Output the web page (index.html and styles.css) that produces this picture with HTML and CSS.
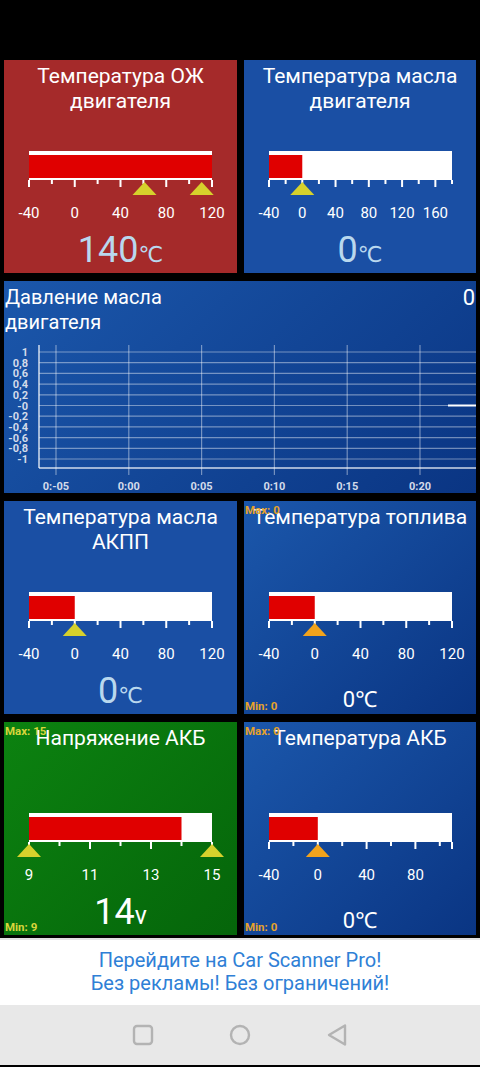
FILE: index.html
```html
<!DOCTYPE html>
<html lang="ru">
  <head>
    <meta charset="UTF-8" />
    <meta name="viewport" content="width=device-width, initial-scale=1.0" />
    <title>Car Scanner</title>
    <link rel="stylesheet" href="styles.css">
  </head>
  <body>
    <div class="status-bar"></div>

    <div class="dashboard">
      <!-- Coolant -->
      <div class="card red">
        <div class="title">Температура ОЖ<br>двигателя</div>
        <svg class="gauge" data-min="-40" data-max="120" data-step="20" data-labels="-40,0,40,80,120" data-value="140" data-marks="61,111" data-mark="#d6d12c"></svg>
        <div class="value">140<span class="unit">℃</span></div>
      </div>

      <!-- Engine oil -->
      <div class="card blue">
        <div class="title">Температура масла<br>двигателя</div>
        <svg class="gauge" data-min="-40" data-max="180" data-step="20" data-labels="-40,0,40,80,120,160" data-value="0" data-marks="0" data-mark="#d6d12c"></svg>
        <div class="value">0<span class="unit">℃</span></div>
      </div>

      <!-- Oil pressure chart -->
      <div class="card blue-grad wide">
        <div class="chart-head">
          <div class="chart-title">Давление масла<br>двигателя</div>
          <div class="chart-value">0</div>
        </div>
        <svg class="chart" viewBox="0 54 472 158"></svg>
      </div>

      <!-- ATF -->
      <div class="card blue">
        <div class="title">Температура масла<br>АКПП</div>
        <svg class="gauge" data-min="-40" data-max="120" data-step="20" data-labels="-40,0,40,80,120" data-value="0" data-marks="0" data-mark="#d6d12c"></svg>
        <div class="value">0<span class="unit">℃</span></div>
      </div>

      <!-- Fuel -->
      <div class="card blue-grad">
        <div class="title">Температура топлива</div>
        <svg class="gauge" data-min="-40" data-max="120" data-step="20" data-labels="-40,0,40,80,120" data-value="0" data-marks="0" data-mark="#f2a31c"></svg>
        <div class="value small">0℃</div>
        <span class="limit max">Max: 0</span>
        <span class="limit min">Min: 0</span>
      </div>

      <!-- Battery voltage -->
      <div class="card green">
        <div class="title">Напряжение АКБ</div>
        <svg class="gauge" data-min="9" data-max="15" data-step="1" data-labels="9,11,13,15" data-value="14" data-marks="9,15" data-mark="#d6d12c"></svg>
        <div class="value white">14<span class="unit volt">v</span></div>
        <span class="limit max yellow">Max: 15</span>
        <span class="limit min yellow">Min: 9</span>
      </div>

      <!-- Battery temp -->
      <div class="card blue-grad">
        <div class="title">Температура АКБ</div>
        <svg class="gauge" data-min="-40" data-max="110" data-step="20" data-labels="-40,0,40,80" data-value="0" data-marks="0" data-mark="#f2a31c"></svg>
        <div class="value small">0℃</div>
        <span class="limit max">Max: 0</span>
        <span class="limit min">Min: 0</span>
      </div>
    </div>

    <div class="promo">
      Перейдите на Car Scanner Pro!<br>
      Без рекламы! Без ограничений!
    </div>

    <div class="nav-bar">
      <svg width="24" height="24" viewBox="0 0 24 24"><rect x="3" y="3" width="18" height="18" rx="3" fill="none" stroke="#b3b3b3" stroke-width="2.4"/></svg>
      <svg width="24" height="24" viewBox="0 0 24 24"><circle cx="12" cy="12" r="9" fill="none" stroke="#b3b3b3" stroke-width="2.4"/></svg>
      <svg width="24" height="24" viewBox="0 0 24 24"><path d="M20 2.5 L4 12 L20 21.5 Z" fill="none" stroke="#b3b3b3" stroke-width="2.4" stroke-linejoin="round"/></svg>
    </div>

    <script>
      // bar gauges: bar is drawn in card coordinates (bar from x 25 to 208)
      function buildGauge(svg) {
        const d = svg.dataset;
        const min = Number(d.min);
        const max = Number(d.max);
        const step = Number(d.step);
        const x0 = 25;
        const x1 = 208;
        const pos = (v) => x0 + ((Math.min(Math.max(v, min), max) - min) / (max - min)) * (x1 - x0);
        const labels = d.labels.split(",").map(Number);

        let out = '<rect x="25" y="91" width="183" height="29" fill="#fff"/>';
        out += '<rect x="25" y="95" width="' + (pos(Number(d.value)) - x0) + '" height="23" fill="#e00000"/>';

        let last = min;
        for (let v = min; v <= max + 0.001; v += step) {
          const len = labels.includes(v) ? 7 : 4;
          out += '<rect x="' + (pos(v) - 1) + '" y="120" width="2" height="' + len + '" fill="#fff"/>';
          last = v;
        }
        if (last < max) {
          out += '<rect x="' + (x1 - 1) + '" y="120" width="2" height="7" fill="#fff"/>';
        }

        d.marks.split(",").forEach((m) => {
          const cx = pos(Number(m));
          out += '<polygon points="' + cx + ',122 ' + (cx - 12) + ',135 ' + (cx + 12) + ',135" fill="' + d.mark + '"/>';
        });

        labels.forEach((l) => {
          out += '<text x="' + pos(l) + '" y="158" text-anchor="middle">' + l + "</text>";
        });

        svg.setAttribute("viewBox", "0 91 233 79");
        svg.innerHTML = out;
      }

      function buildChart(svg) {
        const yLabels = ["1", "0,8", "0,6", "0,4", "0,2", "-0", "-0,2", "-0,4", "-0,6", "-0,8", "-1"];
        const xLabels = ["0:-05", "0:00", "0:05", "0:10", "0:15", "0:20"];
        let out = "";

        yLabels.forEach((t, i) => {
          const y = 71 + i * 10.7;
          out += '<line class="grid" x1="35" y1="' + y + '" x2="472" y2="' + y + '"/>';
          out += '<text class="y-label" x="24" y="' + (y + 4) + '" text-anchor="end">' + t + "</text>";
        });

        xLabels.forEach((t, i) => {
          const x = 52 + i * 72.8;
          out += '<line class="grid" x1="' + x + '" y1="64" x2="' + x + '" y2="194"/>';
          out += '<text class="x-label" x="' + x + '" y="209" text-anchor="middle">' + t + "</text>";
        });

        out += '<line class="axis" x1="35" y1="64" x2="35" y2="187"/>';
        out += '<line class="axis" x1="35" y1="187" x2="472" y2="187"/>';
        out += '<line class="data" x1="444" y1="124.5" x2="472" y2="124.5"/>';

        svg.innerHTML = out;
      }

      document.querySelectorAll(".gauge").forEach(buildGauge);
      document.querySelectorAll(".chart").forEach(buildChart);
    </script>
  </body>
</html>
```

FILE: styles.css
```css
body {
  margin: 0;
  background: #000;
  font-family: Roboto, "Noto Sans", sans-serif;
  color: #fff;
}

.status-bar {
  height: 60px;
}

.dashboard {
  display: grid;
  grid-template-columns: 233px 232px;
  grid-template-rows: 213px 212px 213px 213px;
  gap: 8px 7px;
  padding: 0 4px;
}

.card {
  position: relative;
  overflow: hidden;
  display: flex;
  flex-direction: column;
}

.card.red {
  background: #a52a2a;
}

.card.blue {
  background: #1a4fa4;
}

.card.blue-grad {
  background: linear-gradient(135deg, #1b57ab, #0a3583);
}

.card.green {
  background: linear-gradient(135deg, #0c8210, #05650a);
}

.card.wide {
  grid-column: span 2;
}

.title {
  height: 87px;
  padding: 4px 1px 0;
  font-size: 21px;
  line-height: 25px;
  text-align: center;
  white-space: nowrap;
}

.gauge {
  display: block;
  width: 233px;
  height: 79px;
}

.gauge text {
  font-family: Roboto, sans-serif;
  font-size: 15px;
  fill: #fff;
}

.value {
  height: 40px;
  font-size: 36px;
  line-height: 40px;
  text-align: center;
  color: #b9d8ee;
}

.value.white {
  color: #fff;
}

.value.small {
  height: 31px;
  padding-top: 9px;
  font-size: 22px;
  color: #fff;
}

.unit {
  font-size: 22px;
  font-family: "DejaVu Sans", sans-serif;
}

.unit.volt {
  font-family: Roboto, sans-serif;
  font-size: 25px;
}

.limit {
  position: absolute;
  left: 1px;
  font-size: 11.5px;
  font-weight: bold;
  line-height: 13px;
  color: #e6a32a;
}

.limit.max {
  top: 3px;
}

.limit.min {
  bottom: 1px;
}

.limit.yellow {
  color: #d8d63c;
}

/* oil pressure chart */
.chart-head {
  display: flex;
  justify-content: space-between;
  height: 50px;
  padding: 4px 1px 0;
}

.chart-title {
  font-size: 20px;
  line-height: 25px;
}

.chart-value {
  font-size: 22px;
  line-height: 25px;
}

.chart {
  display: block;
  width: 472px;
  height: 158px;
}

.chart .grid {
  stroke: rgba(255, 255, 255, 0.42);
  stroke-width: 1.2;
}

.chart .axis {
  stroke: rgba(255, 255, 255, 0.6);
  stroke-width: 2;
}

.chart .data {
  stroke: #fff;
  stroke-width: 2;
}

.chart text {
  font-family: Roboto, sans-serif;
  font-size: 11px;
  font-weight: bold;
  fill: #d3dbea;
}

.promo {
  margin-top: 3px;
  border-top: 2px solid #e2e2e2;
  height: 67px;
  box-sizing: border-box;
  padding-top: 9px;
  background: #fff;
  color: #2f80d6;
  font-size: 20px;
  line-height: 23px;
  text-align: center;
}

.nav-bar {
  height: 60px;
  background: #e8e8e8;
  display: flex;
  justify-content: center;
  align-items: center;
  gap: 73px;
}
```
